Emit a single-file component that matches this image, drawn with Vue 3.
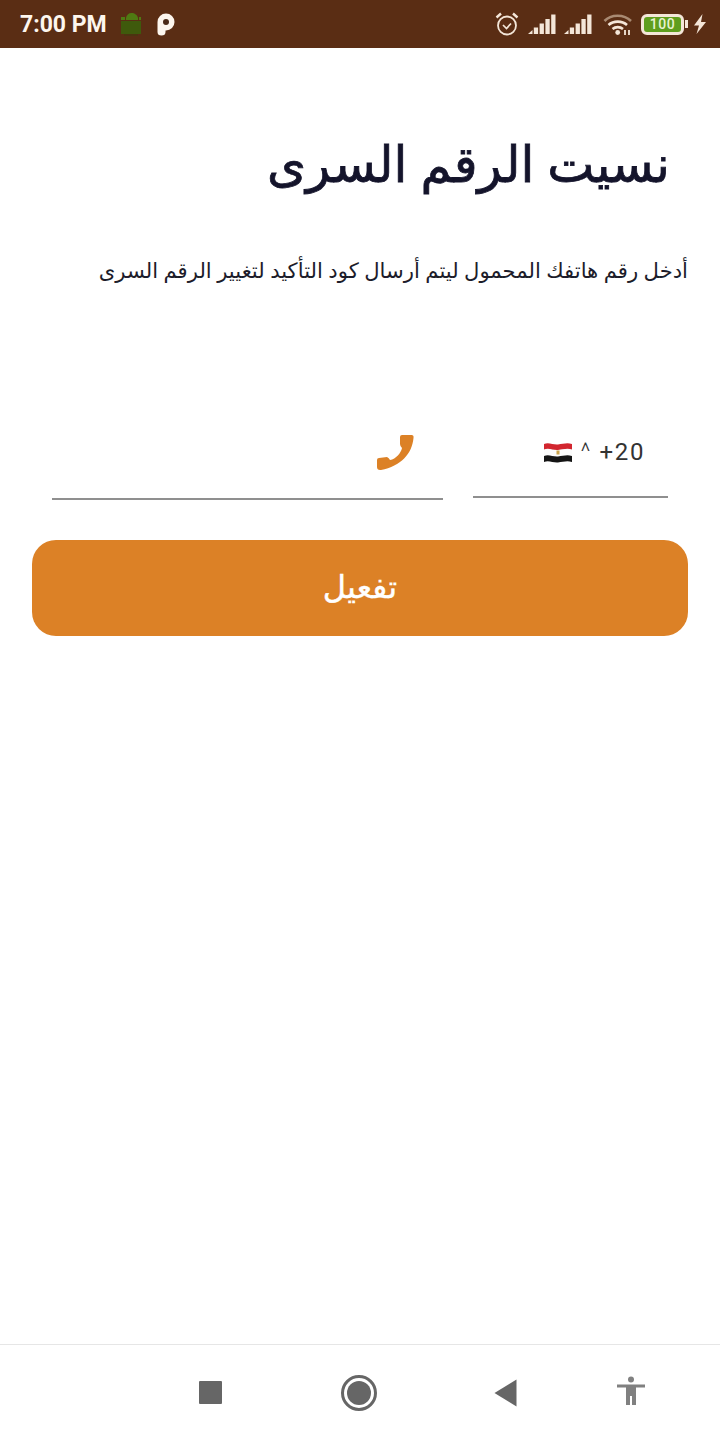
<script setup>
</script>

<template>
  <div class="page">
    <header class="status">
      <div class="status-left">
        <span class="time">7:00 PM</span>
        <svg class="s-android" width="24" height="26" viewBox="0 0 24 26">
          <path d="M2 6h4v3H2zM7 7c.5-3 2.500-5 5.500-5s6 2 6.500 5v2H7zM20 6h2v3h-2z" fill="#4f7a12"/>
          <rect x="2" y="10" width="20" height="13" fill="#3f5a0c"/>
          <rect x="5" y="23" width="14" height="2" fill="#4b3410"/>
        </svg>
        <svg class="s-p" width="20" height="24" viewBox="0 0 20 24">
          <path d="M1.500 10A8.500 8.500 0 1 1 10 18.500H9.500V20Q9.500 23.500 5.500 23.500T1.500 20Z" fill="#fdf6ee"/>
          <circle cx="10" cy="10" r="3" fill="#4a2a18"/>
        </svg>
      </div>
      <div class="status-right">
        <svg class="alarm" width="26" height="26" viewBox="0 0 26 26" fill="none" stroke="#f4e6d8">
          <circle cx="13" cy="14.500" r="9" stroke-width="1.800"/>
          <path d="M9 14l3.500 3.500 4.500-5" stroke-width="1.700"/>
          <path d="M2.500 6.500l4.500-4M23.500 6.500l-4.500-4" stroke-width="2.400"/>
        </svg>
        <svg class="sig" width="28" height="22" viewBox="0 0 28 22" fill="#f4e6d8">
          <path d="M0 21l4.500-4v4zM5.800 14.500h4.300V21H5.800zM11.600 10.500h4.300V21h-4.300zM17.400 6h4.300v15h-4.300zM23.200 1.500h4.300V21h-4.300z"/>
        </svg>
        <svg class="sig" width="28" height="22" viewBox="0 0 28 22" fill="#f4e6d8">
          <path d="M0 21l4.500-4v4zM5.800 14.500h4.300V21H5.800zM11.600 10.500h4.300V21h-4.300zM17.400 6h4.300v15h-4.300zM23.200 1.500h4.300V21h-4.300z"/>
        </svg>
        <svg class="wifi" width="30" height="24" viewBox="0 0 30 24" fill="none">
          <path d="M1.500 9C8 2 21 2 28 9" stroke="#a98a72" stroke-width="2.600"/>
          <path d="M5.500 13c5-4.500 13.500-4.500 18.500 0" stroke="#f4e6d8" stroke-width="2.600"/>
          <path d="M9.500 17c3-2.500 7.500-2.500 10.500 0" stroke="#f4e6d8" stroke-width="2.600"/>
          <circle cx="14.700" cy="20.500" r="2.400" fill="#f4e6d8"/>
          <path d="M22 18v5M26 18v5" stroke="#f4e6d8" stroke-width="1.800"/>
        </svg>
        <div class="battery">
          <div class="batt-body"><span>100</span></div>
          <i class="batt-tip"></i>
        </div>
        <svg class="bolt" width="14" height="22" viewBox="0 0 14 22"><path d="M9.500 1L1 12.500h5L3.500 21 13 9H8z" fill="#f4e6d8"/></svg>
      </div>
    </header>

    <main class="content">
      <h1 class="title" dir="rtl">نسيت الرقم السرى</h1>
      <p class="desc" dir="rtl">أدخل رقم هاتفك المحمول ليتم أرسال كود التأكيد لتغيير الرقم السرى</p>

      <div class="form-row">
        <div class="phone-field">
          <svg class="phone-icon" width="40" height="40" viewBox="0 0 40 40">
            <path d="M27 3L36.500 3Q39 3 38.500 6C37 22 26 34 6 38Q2 38.500 2 35L2 28Q2 26 4 26L12 25Q14 26 15 28C21 27 26 21 27 16Q25 14 25 12L25 5Q25 3 27 3Z" fill="#dc8126"/>
          </svg>
        </div>
        <div class="code-field">
          <svg class="flag" width="30" height="24" viewBox="0 0 30 24">
            <path d="M1 4c5-2 9 1 14 .5s9-2 14-.5v6c-5-1.500-9 0-14 .5s-9-2.500-14-.5z" fill="#d2262f"/>
            <path d="M1 9.500c5-2 9 1 14 .5s9-2 14-.5v6c-5-1.500-9 0-14 .5s-9-2.500-14-.5z" fill="#fbfbfb"/>
            <path d="M1 16c5-2 9 1 14 .5s9-2 14-.5v6c-5-1.500-9 0-14 .5s-9-2.500-14-.5z" fill="#141414"/>
            <rect x="13.500" y="10.500" width="3" height="4" fill="#c9a24a"/>
          </svg>
          <span class="caret">^</span>
          <span class="code">+20</span>
        </div>
      </div>

      <button class="submit" type="button" dir="rtl">تفعيل</button>
    </main>

    <footer class="nav">
      <span class="nav-square"></span>
      <span class="nav-circle"><i></i></span>
      <svg class="nav-back" width="23" height="28" viewBox="0 0 23 28"><path d="M22.500.5v27L.5 14z" fill="#666"/></svg>
      <svg class="nav-access" width="30" height="30" viewBox="0 0 30 30" fill="#808080">
        <circle cx="15" cy="3.500" r="3"/>
        <path d="M1 8.500h28v3h-9V29h-4v-9h-2v9h-4V11.500H1z"/>
      </svg>
    </footer>
  </div>
</template>

<style>
html, body { margin: 0; background: #fff; }
</style>

<style scoped>
.page {
  width: 720px;
  height: 1440px;
  display: flex;
  flex-direction: column;
  background: #fff;
  font-family: "Noto Sans", "DejaVu Sans", sans-serif;
  overflow: hidden;
}
.status {
  height: 48px;
  flex: none;
  background: #5a2d14;
  display: flex;
  align-items: center;
  justify-content: space-between;
  padding: 0 13px 0 20px;
  box-sizing: border-box;
}
.status-left, .status-right { display: flex; align-items: center; }
.time {
  color: #fdf6ee;
  font: 700 23px "Roboto", sans-serif;
  white-space: nowrap;
}
.s-android { margin-left: 12px; }
.s-p { margin-left: 13px; margin-top: -1px; }
.sig { margin-left: 8px; }
.wifi { margin-left: 11px; }
.battery { display: flex; align-items: center; gap: 1px; margin-left: 8px; }
.batt-body {
  width: 43px;
  height: 21px;
  box-sizing: border-box;
  border: 3px solid #f4e6d8;
  border-radius: 6px;
  background: #5f9e1e;
  display: flex;
  align-items: center;
  justify-content: center;
}
.batt-body span { color: #e8f2d0; font: 500 14px "Roboto", sans-serif; letter-spacing: .6px; }
.batt-tip { width: 3px; height: 8px; background: #f4e6d8; display: block; }
.bolt { margin-left: 5px; }
.content {
  flex: 1;
  display: flex;
  flex-direction: column;
  padding: 0 32px;
}
.title {
  margin: 76px 18px 0 0;
  font-size: 50px;
  line-height: 78px;
  font-weight: 400;
  -webkit-text-stroke: .8px #14142b;
  color: #14142b;
  text-align: right;
}
.desc {
  margin: 52px 0 0;
  font-size: 21.15px;
  line-height: 32px;
  color: #1c1c2a;
  text-align: right;
}
.form-row {
  display: flex;
  align-items: flex-end;
  margin: 148px 20px 0;
  gap: 30px;
}
.phone-field {
  width: 391px;
  height: 66px;
  box-sizing: border-box;
  border-bottom: 2px solid #8f8f8f;
  display: flex;
  justify-content: flex-end;
  padding-right: 28px;
}
.phone-icon { margin-top: -2px; }
.code-field {
  width: 195px;
  height: 64px;
  margin-bottom: 2px;
  box-sizing: border-box;
  border-bottom: 2px solid #8f8f8f;
  display: flex;
  align-items: center;
  justify-content: flex-end;
  padding: 0 24px 26px 0;
  color: #333;
  font: 400 24px "Roboto", sans-serif;
}
.code { letter-spacing: 1.6px; margin-right: -1px; }
.flag { margin-right: 8px; }
.caret { margin-right: 9px; font-size: 24px; font-weight: 300; }
.submit {
  margin-top: 40px;
  height: 96px;
  border: 0;
  border-radius: 24px;
  background: #dc8126;
  color: #fff;
  font-family: inherit;
  font-size: 32px;
  -webkit-text-stroke: .4px #fff;
  padding: 0 0 6px;
}
.nav {
  height: 96px;
  flex: none;
  box-sizing: border-box;
  border-top: 1px solid #e6e6e6;
  display: flex;
  align-items: center;
  padding-left: 199px;
}
.nav-square { width: 23px; height: 23px; background: #666; border-radius: 1px; display: block; }
.nav-circle {
  width: 36px;
  height: 36px;
  margin-left: 119px;
  border: 3px solid #666;
  border-radius: 50%;
  box-sizing: border-box;
  display: flex;
  align-items: center;
  justify-content: center;
}
.nav-circle i { width: 24px; height: 24px; border-radius: 50%; background: #666; display: block; }
.nav-back { margin-left: 117px; }
.nav-access { margin-left: 99px; margin-top: -4px; }
</style>
